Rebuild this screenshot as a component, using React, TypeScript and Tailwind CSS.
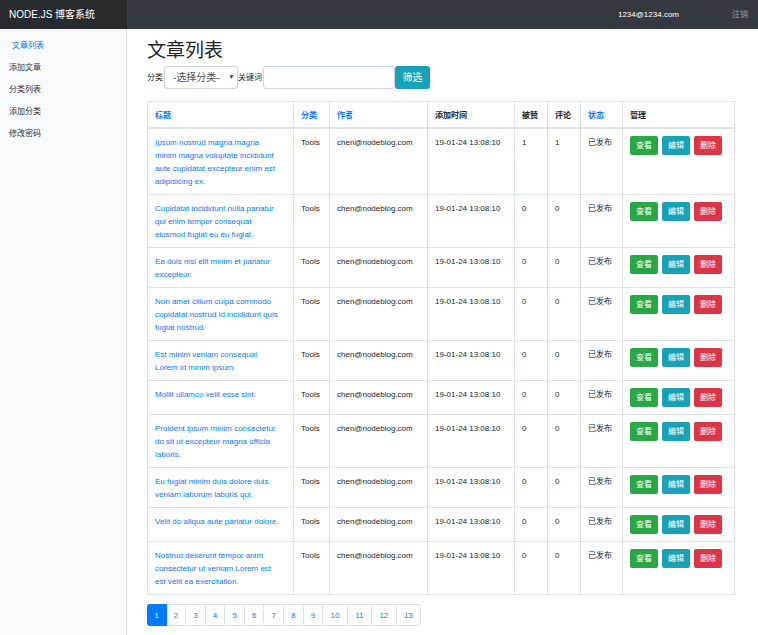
const articles: { title: string[]; likes: number; comments: number }[] = [
  { title: ['Ipsum nostrud magna magna', 'minim magna voluptate incididunt', 'aute cupidatat excepteur enim est', 'adipisicing ex.'], likes: 1, comments: 1 },
  { title: ['Cupidatat incididunt nulla pariatur', 'qui enim tempor consequat', 'eiusmod fugiat eu eu fugiat.'], likes: 0, comments: 0 },
  { title: ['Ea duis nisi elit minim et pariatur', 'excepteur.'], likes: 0, comments: 0 },
  { title: ['Non amet cillum culpa commodo', 'cupidatat nostrud id incididunt quis', 'fugiat nostrud.'], likes: 0, comments: 0 },
  { title: ['Est minim veniam consequat', 'Lorem id minim ipsum.'], likes: 0, comments: 0 },
  { title: ['Mollit ullamco velit esse sint.'], likes: 0, comments: 0 },
  { title: ['Proident ipsum minim consectetur', 'do sit ut excepteur magna officia', 'laboris.'], likes: 0, comments: 0 },
  { title: ['Eu fugiat minim duis dolore duis', 'veniam laborum laboris qui.'], likes: 0, comments: 0 },
  { title: ['Velit do aliqua aute pariatur dolore.'], likes: 0, comments: 0 },
  { title: ['Nostrud deserunt tempor anim', 'consectetur ut veniam Lorem est', 'est velit ea exercitation.'], likes: 0, comments: 0 },
];

const headings = [
  { text: '标题', sortable: true },
  { text: '分类', sortable: true },
  { text: '作者', sortable: true },
  { text: '添加时间', sortable: false },
  { text: '被赞', sortable: false },
  { text: '评论', sortable: false },
  { text: '状态', sortable: true },
  { text: '管理', sortable: false },
];

const menu = ['文章列表', '添加文章', '分类列表', '添加分类', '修改密码'];
const pages = [1, 2, 3, 4, 5, 6, 7, 8, 9, 10, 11, 12, 13];

const cell = 'border border-[#dee2e6] px-[7px] pt-[7px] pb-[6px] align-top';
const action = 'h-[19px] w-[28px] rounded-[2px] text-center text-white';

export default function App() {
  return (
    <div className="flex min-h-screen flex-col bg-white font-['Liberation_Sans','Noto_Sans_CJK_SC',sans-serif] text-[8px] leading-[13px] text-[#212529]">
      <header className="flex h-[29px] items-center bg-[#343a40]">
        <a href="#" className="flex h-full w-[127px] items-center bg-[#272b30] pl-[9px] text-[10px] text-white">
          NODE.JS 博客系统
        </a>
        <span className="ml-auto pr-[53px] text-white">1234@1234.com</span>
        <a href="#" className="pr-[10px] text-[#9a9da0]">注销</a>
      </header>

      <div className="flex flex-1">
        <nav className="w-[127px] shrink-0 border-r border-[#dee2e6] bg-[#f8f9fa] pt-[5px]">
          <ul>
            {menu.map((item, i) => (
              <li key={item} className="flex h-[22px] items-center">
                <a href="#" className={i === 0 ? 'pl-[12px] text-[#007bff]' : 'pl-[9px] text-[#333333]'}>
                  {item}
                </a>
              </li>
            ))}
          </ul>
        </nav>

        <main className="min-w-0 flex-1 pt-[10px] pr-[23px] pb-[9px] pl-[20px]">
          <h1 className="text-[19px] leading-[24px]">文章列表</h1>

          <form className="mt-[3px] flex items-center" onSubmit={(e) => e.preventDefault()}>
            <label htmlFor="category" className="w-[17px]">分类</label>
            <div className="relative">
              <select id="category" className="block h-[23px] w-[74px] appearance-none rounded-[3px] border border-[#ced4da] bg-white pl-[8px] text-[10px] text-[#495057]">
                <option>-选择分类-</option>
              </select>
              <svg className="pointer-events-none absolute top-[9px] right-[4px] h-[4px] w-[5px]" viewBox="0 0 5 4">
                <path d="M0.6 0.3h3.8L2.5 3.8z" fill="#343a40" />
              </svg>
            </div>
            <label htmlFor="keyword" className="w-[25px]">关键词</label>
            <input id="keyword" type="text" className="h-[23px] w-[132px] rounded-[3px] border border-[#ced4da] px-[7px] text-[10px]" />
            <button type="submit" className="h-[23px] w-[35px] rounded-[3px] bg-[#17a2b8] text-[10px] text-white">筛选</button>
          </form>

          <table className="mt-[12px] w-full table-fixed border-collapse">
            <colgroup>
              <col className="w-[146px]" />
              <col className="w-[36px]" />
              <col className="w-[98px]" />
              <col className="w-[87px]" />
              <col className="w-[33px]" />
              <col className="w-[33px]" />
              <col className="w-[42px]" />
              <col />
            </colgroup>
            <thead>
              <tr>
                {headings.map((h) => (
                  <th key={h.text} className="border border-b-2 border-[#dee2e6] px-[7px] pt-[7px] pb-[5px] text-left font-bold">
                    {h.sortable ? <a href="#" className="text-[#007bff]">{h.text}</a> : h.text}
                  </th>
                ))}
              </tr>
            </thead>
            <tbody>
              {articles.map((a) => (
                <tr key={a.title[0]}>
                  <td className={cell}>
                    <a href="#" className="text-[#007bff]">
                      {a.title.map((line) => (
                        <span key={line} className="block whitespace-nowrap">{line}</span>
                      ))}
                    </a>
                  </td>
                  <td className={cell}>Tools</td>
                  <td className={cell}>chen@nodeblog.com</td>
                  <td className={cell}>19-01-24 13:08:10</td>
                  <td className={cell}>{a.likes}</td>
                  <td className={cell}>{a.comments}</td>
                  <td className={cell}>已发布</td>
                  <td className={cell}>
                    <div className="flex gap-[4px] pb-px">
                      <button type="button" className={`${action} bg-[#28a745]`}>查看</button>
                      <button type="button" className={`${action} bg-[#17a2b8]`}>编辑</button>
                      <button type="button" className={`${action} bg-[#dc3545]`}>删除</button>
                    </div>
                  </td>
                </tr>
              ))}
            </tbody>
          </table>

          <nav aria-label="分页">
            <ul className="mt-[9px] flex h-[22px] w-[274px]">
              {pages.map((p) => (
                <li key={p} className={p < 10 ? 'group flex-[4]' : 'group flex-[5]'}>
                  <a
                    href="#"
                    className={
                      p === 1
                        ? 'flex h-full items-center justify-center rounded-l-[3px] bg-[#007bff] text-white'
                        : 'flex h-full items-center justify-center border-y border-r border-[#dee2e6] text-[#007bff] group-last:rounded-r-[3px]'
                    }
                  >
                    {p}
                  </a>
                </li>
              ))}
            </ul>
          </nav>
        </main>
      </div>
    </div>
  );
}
